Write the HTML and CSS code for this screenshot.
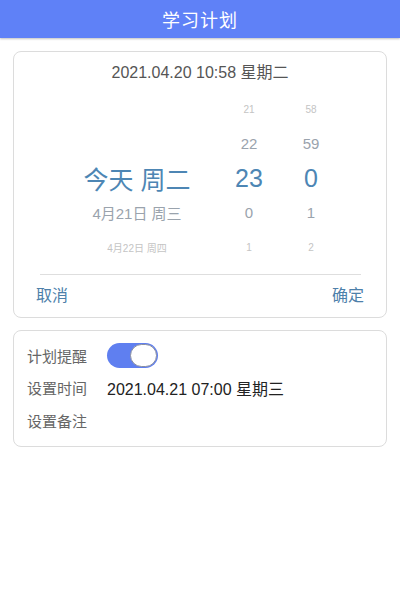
FILE: index.html
```html
<!DOCTYPE html>
<html lang="zh">
<head>
<meta charset="utf-8">
<title>学习计划</title>
<link rel="stylesheet" href="styles.css">
</head>
<body>
<header class="topbar"><h1 class="title">学习计划</h1></header>
<main class="content">
  <section class="card picker-card">
    <div class="now">2021.04.20 10:58 星期二</div>
    <div class="picker">
      <div class="col col-date">
        <div class="cell far">4月19日 周一</div>
        <div class="cell near">4月20日 周二</div>
        <div class="cell sel">今天 周二</div>
        <div class="cell near">4月21日 周三</div>
        <div class="cell far">4月22日 周四</div>
      </div>
      <div class="col">
        <div class="cell far">21</div>
        <div class="cell near">22</div>
        <div class="cell sel">23</div>
        <div class="cell near">0</div>
        <div class="cell far">1</div>
      </div>
      <div class="col">
        <div class="cell far">58</div>
        <div class="cell near">59</div>
        <div class="cell sel">0</div>
        <div class="cell near">1</div>
        <div class="cell far">2</div>
      </div>
    </div>
    <div class="divider"></div>
    <div class="actions">
      <span class="btn">取消</span>
      <span class="btn">确定</span>
    </div>
  </section>
  <section class="card settings">
    <div class="row">
      <span class="label">计划提醒</span>
      <span class="toggle"><span class="knob"></span></span>
    </div>
    <div class="row">
      <span class="label">设置时间</span>
      <span class="value">2021.04.21 07:00 星期三</span>
    </div>
    <div class="row">
      <span class="label">设置备注</span>
    </div>
  </section>
</main>
</body>
</html>
```
FILE: styles.css
```css
* { box-sizing: border-box; }
html, body { margin: 0; padding: 0; }
body {
  width: 400px;
  height: 616px;
  background: #ffffff;
  font-family: "Liberation Sans", "Noto Sans CJK SC", sans-serif;
  overflow: hidden;
}
.topbar {
  height: 38px;
  background: #5f81f7;
  display: flex;
  align-items: center;
  justify-content: center;
  box-shadow: 0 1px 2px rgba(0,0,0,0.25);
}
.title {
  margin: 0;
  font-size: 18px;
  font-weight: normal;
  color: #ffffff;
  letter-spacing: 1px;
}
.content {
  padding: 13px 13px 0 13px;
  display: flex;
  flex-direction: column;
  gap: 12px;
}
.card {
  border: 1px solid #dcdcdc;
  border-radius: 8px;
  background: #fff;
}
.picker-card {
  height: 267px;
  padding-top: 11px;
  display: flex;
  flex-direction: column;
}
.now {
  text-align: center;
  font-size: 16px;
  line-height: 20px;
  color: #555;
}
.picker {
  margin-top: 9px;
  padding-left: 42px;
  display: grid;
  grid-template-columns: 162px 62px 62px;
}
.col { display: flex; flex-direction: column; align-items: center; }
.cell {
  height: 34.5px;
  display: flex;
  align-items: center;
  justify-content: center;
  white-space: nowrap;
}
.far { font-size: 10px; color: #c4c4c4; }
.col-date .far:first-child { visibility: hidden; }
.col-date .near:nth-child(2) { visibility: hidden; }
.near { font-size: 15px; color: #9aa3ad; }
.sel { font-size: 25px; color: #4d86b4; }
.divider {
  margin: 9px 25px 0 26px;
  height: 1px;
  background: #dedede;
}
.actions {
  display: flex;
  justify-content: space-between;
  padding: 11px 22px 0 22px;
}
.btn { font-size: 16px; line-height: 20px; color: #4d80aa; }
.settings {
  height: 117px;
  padding: 8px 0 0 13px;
  display: flex;
  flex-direction: column;
}
.row {
  height: 32.5px;
  display: flex;
  align-items: center;
}
.label { width: 80px; font-size: 15px; color: #666; }
.value { font-size: 16px; color: #222; }
.toggle {
  width: 51px;
  height: 25px;
  border-radius: 13px;
  background: #5f7ff0;
  display: flex;
  align-items: center;
  justify-content: flex-end;
  padding-right: 1px;
}
.knob {
  width: 27px;
  height: 23px;
  border-radius: 12px;
  background: #fff;
  border: 1px solid #8a8fa0;
}
```
